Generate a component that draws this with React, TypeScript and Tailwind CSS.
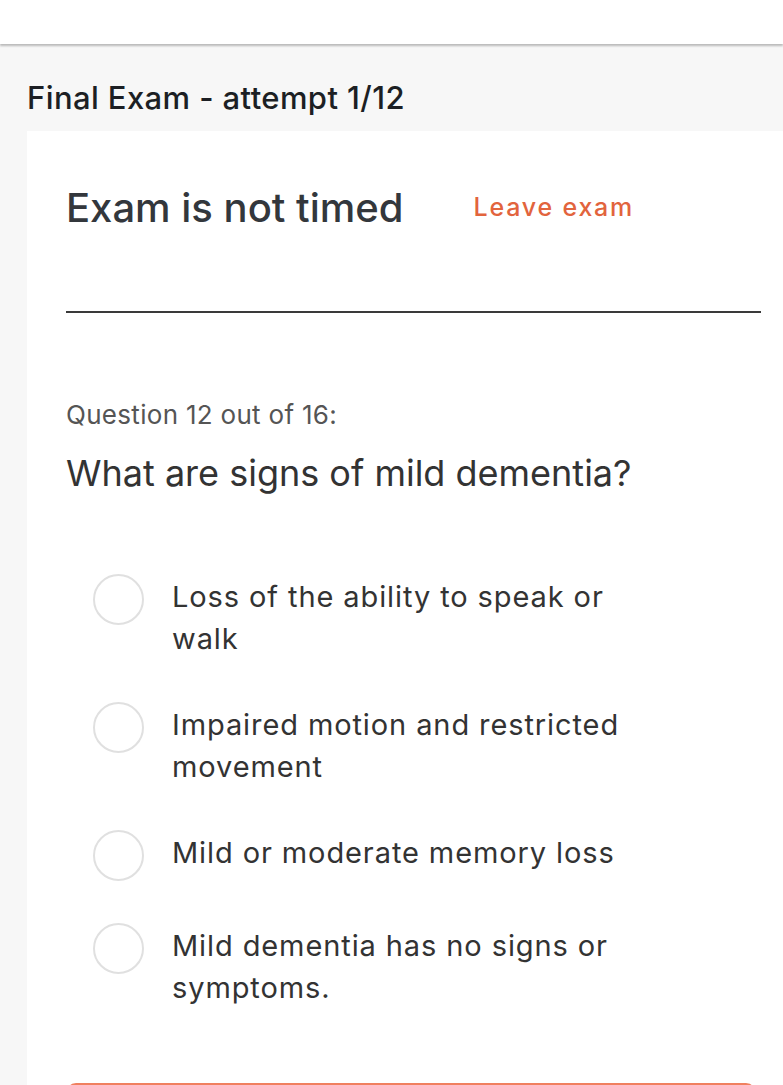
import React from 'react';

const options = [
  'Loss of the ability to speak or walk',
  'Impaired motion and restricted movement',
  'Mild or moderate memory loss',
  'Mild dementia has no signs or symptoms.',
];

const App: React.FC = () => {
  return (
    <div
      className="min-h-screen w-full overflow-hidden bg-[#f7f7f7]"
      style={{ fontFamily: 'Inter, "Noto Sans", sans-serif' }}
    >
      {/* Top bar */}
      <div className="h-[44px] w-full bg-white shadow-[0_2px_2px_rgba(0,0,0,0.25)]" />

      <h1 className="ml-[27px] mt-[36px] text-[31px] font-medium leading-[36px] tracking-[0.4px] text-[#1c1f24]">
        Final Exam - attempt 1/12
      </h1>

      <div className="ml-[27px] mt-[15px] bg-white pl-[39px] pr-[22px] pt-[53px] pb-[80px]">
        <div className="flex items-center">
          <span className="text-[40px] font-medium leading-[48px] text-[#33373c]">Exam is not timed</span>
          <button className="ml-[70px] text-[25px] font-medium tracking-[1.8px] text-[#e2643d]">
            Leave exam
          </button>
        </div>

        <div className="mt-[79px] h-[2px] w-full bg-[#3a3a3a]" />

        <p className="mt-[86px] text-[26px] leading-[32px] tracking-[0.3px] text-[#555]">Question 12 out of 16:</p>
        <h2 className="mt-[19px] text-[36px] leading-[46px] text-[#333]">What are signs of mild dementia?</h2>

        <ul className="mt-[78px] flex flex-col gap-[42px] pl-[27px]">
          {options.map((o) => (
            <li key={o} className="flex items-start">
              <span className="h-[51px] w-[51px] shrink-0 rounded-full border-2 border-[#e0e0e0]" />
              <span className="ml-[28px] max-w-[470px] pt-[2px] text-[29px] leading-[42px] tracking-[0.9px] text-[#333]">{o}</span>
            </li>
          ))}
        </ul>

        <div className="mt-[74px] h-[56px] w-[690px] rounded-[10px] bg-[#f0805f]" />
      </div>
    </div>
  );
};

export default App;
